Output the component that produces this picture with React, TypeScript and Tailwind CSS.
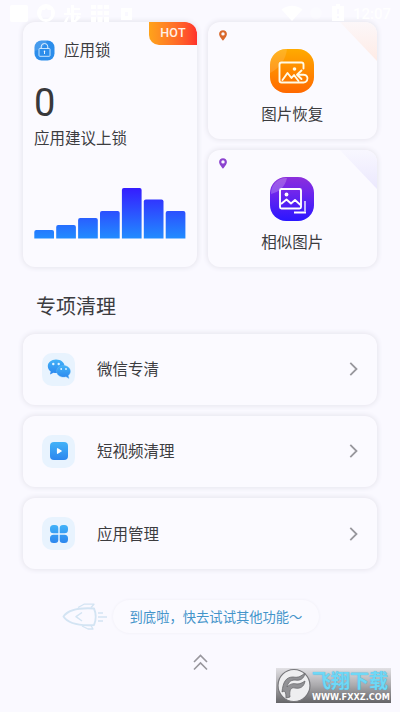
import type { ReactNode } from "react";

const bars = [8.5, 13.5, 20.5, 27.5, 50.5, 39, 27.5];

const StatusBar = () => (
  <div className="absolute inset-x-0 top-0 h-6 text-white">
    <svg width="400" height="24" viewBox="0 0 400 24" fill="currentColor">
      <rect x="10" y="5" width="18" height="17" rx="2" />
      <path fillRule="evenodd" d="M46 4a9 9 0 1 0 0 18a9 9 0 0 0 0-18zM42 10h3l1-2 2 2h3v6l-3 3h-5l-2-4z" />
      <path d="M71 5h3v3h6v2h-6v3h7v2h-7v5h-3v-5h-7v-2h3V8h3v5h1zM66 18l3-2-2 6h-3zM77 15l4 2-5 5h-5v-2h4z" />
      <path d="M91 5h5v4h-5zM97.500 5h5v4h-5zM104 5h5v4h-5zM91 11h5v4h-5zM97.500 11h5v4h-5zM104 11h5v4h-5zM91 17h5v5h-5zM97.500 17h5v5h-5zM104 17h5v5h-5z" />
      <path fillRule="evenodd" d="M121 8h11v12h-11zM125 12v4h3v-4z" />
      <path d="M281.500 9.500q10.500-7.500 21 0L292 21z" />
      <circle cx="316" cy="13" r="6" opacity=".3" />
      <path fillRule="evenodd" d="M336 4h4v2h4v15h-12V6h4zM337 9v5h2V9zM337 16v2h2v-2z" />
    </svg>
    <span className="absolute left-[353px] top-[4px] font-[Roboto,sans-serif] text-[15px] leading-5 font-medium">12:07</span>
  </div>
);

const LockIcon = () => (
  <svg width="21" height="21" viewBox="0 0 21 21" fill="none">
    <rect x=".5" y=".5" width="20" height="20" rx="7" fill="#2b8deb" />
    <path d="M.5 11V7.500a7 7 0 0 1 7-7H13C11 6 6 10 .5 11z" fill="#fff" opacity=".13" />
    <rect x="5" y="8.500" width="11" height="7.800" rx=".8" stroke="#d7edff" strokeWidth=".9" />
    <path d="M7.200 8.500V6.800a3.300 3.300 0 0 1 6.600 0v1.700M10.500 11v3" stroke="#e5f3ff" strokeWidth="1" />
    <circle cx="10.500" cy="11.300" r=".8" fill="#fff" />
  </svg>
);

const BarChart = () => (
  <svg width="152" height="52" viewBox="0 0 152 52">
    <defs>
      <linearGradient id="bars" gradientUnits="userSpaceOnUse" x1="0" y1="1" x2="0" y2="51.500">
        <stop stopColor="#351cff" />
        <stop offset="1" stopColor="#218cff" />
      </linearGradient>
    </defs>
    {bars.map((h, i) => (
      <path
        key={i}
        fill="url(#bars)"
        d={`M${0.3 + i * 21.9} 51.500v-${h - 2}q0-2 2-2h15.700q2 0 2 2v${h - 2}z`}
      />
    ))}
  </svg>
);

const Pin = ({ color }: { color: string }) => (
  <svg className="absolute left-[11px] top-[8px]" width="8" height="11" viewBox="0 0 8 11">
    <path fillRule="evenodd" fill={color} d="M4 .2C1.800.2.100 1.900.100 4c0 2.600 3.900 6.700 3.900 6.700S7.900 6.600 7.900 4C7.900 1.900 6.200.2 4 .2zM4 2.200a1.700 1.700 0 1 1 0 3.400a1.700 1.700 0 0 1 0-3.400z" />
  </svg>
);

const RestoreIcon = () => (
  <svg width="44" height="44" viewBox="0 0 44 44" fill="none">
    <defs>
      <linearGradient id="restore" x1="0" y1="0" x2="0" y2="1">
        <stop stopColor="#ffab00" />
        <stop offset="1" stopColor="#ff6900" />
      </linearGradient>
    </defs>
    <rect width="44" height="44" rx="16" fill="url(#restore)" />
    <path d="M0 24V16A16 16 0 0 1 16 0h1C16 10 10 19 0 24z" fill="#fff" opacity=".13" />
    <g stroke="#fffbe8" strokeWidth="1.900" strokeLinecap="round" strokeLinejoin="round">
      <path d="M33.500 19.500v-4q0-2-2-2H11.500q-2 0-2 2v16q0 2 2 2h22a4 4 0 0 0 3.500-6q-1-1.800-3.500-1.800h-5" />
      <path d="M12.500 31l5-7 4 5 2.500-3 4.500 6M31.500 21.500l-4.500 4.200 4.500 4.300" />
    </g>
    <circle cx="24.500" cy="20" r="1.800" fill="#fffbe8" />
  </svg>
);

const SimilarIcon = () => (
  <svg width="44" height="44" viewBox="0 0 44 44" fill="none">
    <defs>
      <linearGradient id="similar" x1="0" y1="0" x2="0" y2="1">
        <stop stopColor="#8c2fdb" />
        <stop offset=".35" stopColor="#6f26ec" />
        <stop offset="1" stopColor="#2a16ff" />
      </linearGradient>
    </defs>
    <rect width="44" height="44" rx="16" fill="url(#similar)" />
    <path d="M1 17V16A15 15 0 0 1 16 1h1C15 10 9 15 1 17z" fill="#fff" opacity=".22" />
    <rect x="10" y="12" width="21" height="19.500" rx="1.500" stroke="#fff" strokeWidth="1.900" />
    <path d="M11 27l5.500-4.500 4.500 4 4-3.500 5.500 5" stroke="#fff" strokeWidth="1.900" strokeLinejoin="round" />
    <circle cx="16.500" cy="17.500" r="1.900" fill="#fff" />
    <path d="M24 35.500h12" stroke="#fff" strokeWidth="2.200" />
    <path d="M35 24v10.500" stroke="#fff" strokeWidth="1.800" opacity=".75" />
  </svg>
);

type ToolCardProps = { title: string; pin: string; corner: string; children: ReactNode };

const ToolCard = ({ title, pin, corner, children }: ToolCardProps) => (
  <div className="relative flex h-[116.5px] flex-col items-center overflow-hidden rounded-[12px] bg-[#fbfaff] pt-[27px] shadow-[0_0_5px_1px_#e6e5ed]">
    <div className={`absolute right-0 top-0 h-[39px] w-[37px] [clip-path:polygon(0_0,100%_0,100%_100%)] ${corner}`} />
    <Pin color={pin} />
    {children}
    <span className="mt-[10px] text-[15.5px] leading-6">{title}</span>
  </div>
);

const BlueGradient = ({ id }: { id: string }) => (
  <linearGradient id={id} x1="0" y1="0" x2="0" y2="1">
    <stop stopColor="#42b2f8" />
    <stop offset="1" stopColor="#2c86ee" />
  </linearGradient>
);

const ChatIcon = () => (
  <svg width="24" height="20" viewBox="0 0 24 20">
    <defs><BlueGradient id="chat" /></defs>
    <path fill="url(#chat)" d="M9 .5C4.200.5.800 3.500.800 7.200c0 2.200 1.200 4 2.900 5.200L3 15.500l3.500-1.800q1.500.4 3.200.3C14 14 17.500 11 17.500 7.200S14 .5 9 .5z" />
    <path fill="url(#chat)" stroke="#69bcf8" strokeWidth=".4" d="M16.500 6.500c-4 0-6.900 2.600-6.900 5.800s2.900 5.800 6.900 5.800q1.300 0 2.500-.4l3 1.700-.8-2.800c1.300-1 2.200-2.500 2.200-4.300 0-3.200-3-5.800-6.900-5.800z" />
    <g fill="#e2f5ff">
      <circle cx="6.300" cy="5" r="1.200" />
      <circle cx="11.700" cy="5" r="1.200" />
      <circle cx="14.200" cy="10" r=".9" />
      <circle cx="19" cy="10" r=".9" />
    </g>
  </svg>
);

const VideoIcon = () => (
  <svg width="18" height="18" viewBox="0 0 18 18">
    <defs><BlueGradient id="video" /></defs>
    <rect width="18" height="18" rx="4" fill="url(#video)" />
    <path d="M7.500 6.700v4.600L11.200 9z" fill="#fff" stroke="#fff" strokeWidth="1.200" strokeLinejoin="round" />
  </svg>
);

const AppsIcon = () => (
  <svg width="18" height="18" viewBox="0 0 18 18">
    <defs>
      <linearGradient id="apps" gradientUnits="userSpaceOnUse" x1="0" y1="0" x2="0" y2="18">
        <stop stopColor="#42b2f8" />
        <stop offset="1" stopColor="#2c86ee" />
      </linearGradient>
    </defs>
    <path fill="url(#apps)" d="M3.500 0H5a3.300 3.300 0 0 1 3.300 3.300v5H3.500A3.500 3.500 0 0 1 0 4.800V3.500A3.500 3.500 0 0 1 3.500 0zM13 0h1.500A3.500 3.500 0 0 1 18 3.500v1.300a3.500 3.500 0 0 1-3.500 3.500H9.700v-5A3.300 3.300 0 0 1 13 0zM3.500 9.700h4.800v5A3.300 3.300 0 0 1 5 18H3.500A3.500 3.500 0 0 1 0 14.500v-1.300a3.500 3.500 0 0 1 3.500-3.500zM9.700 9.700h4.800a3.500 3.500 0 0 1 3.500 3.500v1.300a3.500 3.500 0 0 1-3.500 3.500H13a3.300 3.300 0 0 1-3.300-3.300z" />
  </svg>
);

const CleanRow = ({ title, children }: { title: string; children: ReactNode }) => (
  <div className="flex h-[71px] items-center rounded-[12px] bg-[#fbfaff] px-[19px] shadow-[0_0_5px_1px_#e6e5ed]">
    <div className="flex size-[33px] items-center justify-center rounded-[10px] bg-[#e8f3fe]">{children}</div>
    <span className="ml-[22px] pt-[2px] text-[15.5px] leading-6">{title}</span>
    <svg className="ml-auto" width="9" height="14" viewBox="0 0 9 14" fill="none" stroke="#98979d" strokeWidth="1.800">
      <path d="M1.300.8l6.200 6.200-6.200 6.200" />
    </svg>
  </div>
);

const Rocket = () => (
  <svg width="46" height="30" viewBox="0 0 46 30" fill="none" stroke="#d3e4f3" strokeWidth="1.900" strokeLinejoin="round">
    <path d="M1.500 14.500C6 8 16 5.500 32 6.500q3.500 8 0 16.500C16 24 6 21.500 1.500 14.500z" />
    <path d="M20 10.500l-6 4.200 6 4.300" strokeWidth="1.500" />
    <path d="M16 5.500l6-3.300h10l-3 3.300M20 24l6 3h5l-2-3.500" strokeWidth="1.300" />
    <path d="M36 11h5M36 15h9M36 19h5" strokeWidth="1.300" />
  </svg>
);

const SiteBadge = () => (
  <div className="absolute left-[276px] top-[668px] flex h-[35px] w-[115px] bg-linear-to-b from-[#e2e1e5] via-[#aaa9ac] to-[#656568]">
    <svg width="36" height="35" viewBox="0 0 36 35">
      <circle cx="18" cy="17.500" r="16" fill="#eeeef0" stroke="#77777b" strokeWidth="1.200" />
      <path d="M6 24C7 14 10 9 17 9c6 1 8-1 12-4-1 6-5 8-10 7-5 0-7 3-8 7 3-3 6-4 10-3 3 0 5-1 8-3-1 6-5 8-10 7-4-1-6 2-5 9l-4 1c0-6-1-8-4-6z" fill="#919195" stroke="#68686c" strokeWidth=".8" />
    </svg>
    <div className="flex flex-col pt-[2px]">
      <span className="whitespace-nowrap text-[19px] font-bold leading-[23px] text-[#6fd8f6] [text-shadow:0_0_1px_#3aa5cc]">飞翔下载</span>
      <span className="font-['DejaVu_Sans',sans-serif] text-[8.2px] font-bold leading-[9px] text-white">WWW.FXXZ.COM</span>
    </div>
  </div>
);

const App = () => {
  return (
    <div className="relative h-[712px] w-[400px] overflow-hidden bg-[#faf9ff] px-[23px] pt-[22px] font-[Roboto,'Noto_Sans_CJK_SC',sans-serif] text-[#3c3c3f]">
      <div className="grid grid-cols-[174px_169.5px] gap-[10.5px]">
        <div className="relative flex h-[244.5px] flex-col overflow-hidden rounded-[12px] bg-[#fbfaff] pl-[11px] pt-[17px] shadow-[0_0_5px_1px_#e6e5ed]">
          <span className="absolute right-0 top-0 flex h-[23px] w-[48px] items-center justify-center rounded-bl-[10px] rounded-tr-[10px] bg-linear-to-r from-[#ffa31a] to-[#ff302c] text-[12.5px] font-medium tracking-[.2px] text-[#fff0e6]">
            HOT
          </span>
          <div className="flex items-center gap-[9px]">
            <LockIcon />
            <span className="pt-[2px] text-[15.5px] leading-[21px]">应用锁</span>
          </div>
          <div className="mt-[19px] text-[38px] leading-[44px] text-[#38383b]">0</div>
          <div className="mt-[2px] text-[15.5px] leading-6">应用建议上锁</div>
          <div className="mt-[36px]">
            <BarChart />
          </div>
        </div>
        <div className="flex flex-col gap-[11.5px]">
          <ToolCard title="图片恢复" pin="#d9682b" corner="bg-linear-to-b from-[#fcf7f9] to-[#feebe5]">
            <RestoreIcon />
          </ToolCard>
          <ToolCard title="相似图片" pin="#8c43cf" corner="bg-linear-to-b from-[#f8f7ff] to-[#ebe8fd]">
            <SimilarIcon />
          </ToolCard>
        </div>
      </div>
      <h2 className="mt-[25px] pl-[13px] text-[20px] leading-[30px]">专项清理</h2>
      <div className="mt-[12px] flex flex-col gap-[11.3px]">
        <CleanRow title="微信专清">
          <ChatIcon />
        </CleanRow>
        <CleanRow title="短视频清理">
          <VideoIcon />
        </CleanRow>
        <CleanRow title="应用管理">
          <AppsIcon />
        </CleanRow>
      </div>
      <div className="mt-[31px] flex items-center pl-[39px]">
        <Rocket />
        <div className="ml-[5px] flex h-[33px] w-[206px] items-center justify-center rounded-full bg-[#fbfaff] pt-[3px] text-[13.3px] text-[#4394ca] shadow-[0_0_3px_#eeedf4]">
          <span className="whitespace-nowrap">到底啦，快去试试其他功能～</span>
        </div>
      </div>
      <svg className="ml-[170px] mt-[21px]" width="15" height="17" viewBox="0 0 15 17" fill="none" stroke="#98979d" strokeWidth="1.600">
        <path d="M1 8l6.500-6.500L14 8M1 15.500L7.500 9l6.500 6.500" />
      </svg>
      <StatusBar />
      <SiteBadge />
    </div>
  );
};

export default App;
